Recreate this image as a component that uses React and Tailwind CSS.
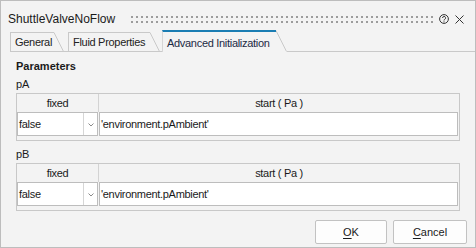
import React from 'react';

const Grip = () => (
  <svg width="302" height="7" className="block">
    <defs>
      <pattern id="grip" width="5" height="5" patternUnits="userSpaceOnUse">
        <rect width="2" height="2" fill="#9c9c9c" />
      </pattern>
    </defs>
    <rect width="302" height="7" fill="url(#grip)" />
  </svg>
);

const HelpIcon = () => (
  <svg width="10" height="10" viewBox="0 0 10 10" className="block">
    <circle cx="5" cy="5" r="4.4" fill="none" stroke="#333" strokeWidth="1" />
    <path d="M3.6 4 A1.5 1.5 0 1 1 5.7 5.3 C5.2 5.6 5 5.9 5 6.5" fill="none" stroke="#333" strokeWidth="1" />
    <circle cx="5" cy="7.8" r="0.6" fill="#333" />
  </svg>
);

const CloseIcon = () => (
  <svg width="9" height="9" viewBox="0 0 9 9" className="block">
    <path d="M0.5 0.5 L8.5 8.5 M8.5 0.5 L0.5 8.5" stroke="#333" strokeWidth="1" />
  </svg>
);

// slanted right edge of a tab
const Slant = ({ active }) =>
  active ? (
    <svg width="11" height="22" className="block">
      <path d="M0 0.5 L10.5 21.5" stroke="#c9c9c9" strokeWidth="1" fill="none" />
    </svg>
  ) : (
    <svg width="10" height="20" className="block">
      <path d="M0 0.5 L9.5 19.5" stroke="#c9c9c9" strokeWidth="1" fill="none" />
      <path d="M0 19.5 L10 19.5" stroke="#c9c9c9" strokeWidth="1" />
    </svg>
  );

const Tab = ({ label, width }) => (
  <div className="flex items-end">
    <div
      className={`h-[20px] border-l border-t border-b border-[#c9c9c9] pl-[4px] pt-[1px] text-[11px] leading-[17px] tracking-[-0.3px] text-[#222] ${width}`}
    >
      {label}
    </div>
    <Slant />
  </div>
);

const ChevronDown = () => (
  <svg width="6" height="4" viewBox="0 0 6 4" className="block">
    <path d="M0.5 0.5 L3 3 L5.5 0.5" stroke="#8a8a8a" strokeWidth="1" fill="none" />
  </svg>
);

const ParamTable = () => (
  <div className="w-[444px] border border-[#c8c8c8] text-[11px] tracking-[-0.3px] text-[#1a1a1a]">
    <div className="flex h-[18px]">
      <div className="flex w-[82px] items-center justify-center border-r border-[#d3d3d3] leading-[18px]">fixed</div>
      <div className="flex flex-1 items-center justify-center leading-[18px]">start ( Pa )</div>
    </div>
    <div className="flex h-[24px]">
      <div className="flex w-[81px] border border-[#bdbdbd] bg-white">
        <span className="flex-1 pl-[1px] pt-[1px] leading-[21px]">false</span>
        <span className="flex w-[14px] items-center justify-center border-l border-[#d6d6d6] pt-[1px]">
          <ChevronDown />
        </span>
      </div>
      <div className="ml-[1px] mr-[1px] flex-1 border border-[#bdbdbd] bg-white pl-[1px] pt-[1px] leading-[21px]">
        'environment.pAmbient'
      </div>
    </div>
    <div className="h-[4px]" />
  </div>
);

export default function App() {
  return (
    <div className="flex h-[248px] w-[476px] flex-col overflow-hidden border border-[#bdbdbd] bg-[#f3f3f3] font-['Liberation_Sans',Arial,sans-serif] text-[#1a1a1a]">
      {/* title bar */}
      <div className="flex h-[29px] items-center pl-[7px] pr-[9px] pt-[7px]">
        <span className="text-[12px] leading-[14px] text-[#1a1a1a]">ShuttleValveNoFlow</span>
        <div className="ml-[16px] mt-[1px]">
          <Grip />
        </div>
        <div className="ml-[6px]">
          <HelpIcon />
        </div>
        <div className="ml-[6px]">
          <CloseIcon />
        </div>
      </div>

      {/* tabs */}
      <div className="flex h-[22px] items-end pl-[9px]">
        <Tab label="General" width="w-[44px]" />
        <div className="h-[1px] w-[4px] bg-[#c9c9c9]" />
        <Tab label="Fluid Properties" width="w-[82px]" />
        <div className="h-[1px] w-[2px] bg-[#c9c9c9]" />
        <div className="flex items-end">
          <div className="h-[22px] w-[114px] border-l border-t-2 border-l-[#d6d6d6] border-t-[#1a7db3] pl-[4px] pt-[2px] text-[11px] leading-[18px] tracking-[-0.3px] text-[#1c2a44]">
            Advanced Initialization
          </div>
          <Slant active />
        </div>
        <div className="h-[1px] flex-1 bg-[#c9c9c9]" />
      </div>

      {/* content */}
      <div className="flex flex-col pl-[15px] pt-[7px]">
        <div className="text-[11px] font-bold leading-[14px]">Parameters</div>
        <div className="mt-[4px] text-[11px] leading-[14px]">pA</div>
        <div className="mt-[2px]">
          <ParamTable />
        </div>
        <div className="mt-[6px] text-[11px] leading-[14px]">pB</div>
        <div className="mt-[2px]">
          <ParamTable />
        </div>
      </div>

      {/* buttons */}
      <div className="mt-[9px] flex justify-end gap-[6px] pr-[8px]">
        <button className="h-[24px] w-[72px] rounded-[2px] border border-[#c2c2c2] bg-[#fdfdfd] text-[11px] text-[#1a1a1a]">
          <span className="underline underline-offset-[2px]">O</span>K
        </button>
        <button className="h-[24px] w-[74px] rounded-[2px] border border-[#c2c2c2] bg-[#fdfdfd] text-[11px] text-[#1a1a1a]">
          <span className="underline underline-offset-[2px]">C</span>ancel
        </button>
      </div>
    </div>
  );
}
